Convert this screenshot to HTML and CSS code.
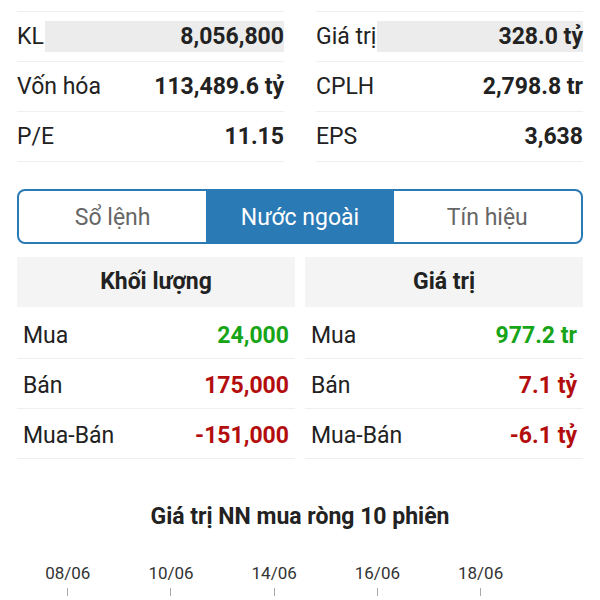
FILE: index.html
```html
<!DOCTYPE html>
<html lang="vi">
<head>
  <meta charset="UTF-8">
  <meta name="viewport" content="width=device-width, initial-scale=1.0">
  <title>Nước ngoài</title>
  <link rel="stylesheet" href="styles.css">
</head>
<body>
  <div class="stats">
    <div class="stat-col">
      <div class="stat-row">
        <span class="label">KL</span>
        <span class="value flash">8,056,800</span>
      </div>
      <div class="stat-row">
        <span class="label">Vốn hóa</span>
        <span class="value">113,489.6 tỷ</span>
      </div>
      <div class="stat-row">
        <span class="label">P/E</span>
        <span class="value">11.15</span>
      </div>
    </div>
    <div class="stat-col">
      <div class="stat-row">
        <span class="label">Giá trị</span>
        <span class="value flash">328.0 tỷ</span>
      </div>
      <div class="stat-row">
        <span class="label">CPLH</span>
        <span class="value">2,798.8 tr</span>
      </div>
      <div class="stat-row">
        <span class="label">EPS</span>
        <span class="value">3,638</span>
      </div>
    </div>
  </div>

  <div class="tabs">
    <div class="tab">Sổ lệnh</div>
    <div class="tab active">Nước ngoài</div>
    <div class="tab">Tín hiệu</div>
  </div>

  <div class="foreign">
    <div class="panel">
      <div class="panel-head">Khối lượng</div>
      <div class="panel-row">
        <span>Mua</span>
        <span class="num up">24,000</span>
      </div>
      <div class="panel-row">
        <span>Bán</span>
        <span class="num down">175,000</span>
      </div>
      <div class="panel-row">
        <span>Mua-Bán</span>
        <span class="num down">-151,000</span>
      </div>
    </div>
    <div class="panel">
      <div class="panel-head">Giá trị</div>
      <div class="panel-row">
        <span>Mua</span>
        <span class="num up">977.2 tr</span>
      </div>
      <div class="panel-row">
        <span>Bán</span>
        <span class="num down">7.1 tỷ</span>
      </div>
      <div class="panel-row">
        <span>Mua-Bán</span>
        <span class="num down">-6.1 tỷ</span>
      </div>
    </div>
  </div>

  <h2 class="chart-title">Giá trị NN mua ròng 10 phiên</h2>

  <div class="axis">
    <div class="tick">08/06</div>
    <div></div>
    <div class="tick">10/06</div>
    <div></div>
    <div class="tick">14/06</div>
    <div></div>
    <div class="tick">16/06</div>
    <div></div>
    <div class="tick">18/06</div>
    <div></div>
  </div>
</body>
</html>
```

FILE: styles.css
```css
body {
  margin: 0;
  font-family: Roboto, "Noto Sans", sans-serif;
  color: #222;
  background: #fff;
}
.stats {
  display: grid;
  grid-template-columns: 1fr 1fr;
  column-gap: 32px;
  padding: 11px 17px 0;
}
.stat-col {
  border-top: 1px solid #efefef;
}
.stat-row {
  display: flex;
  align-items: center;
  height: 49px;
  border-bottom: 1px solid #efefef;
  font-size: 23px;
}
.stat-row .label {
  white-space: nowrap;
}
.stat-row .value {
  margin-left: auto;
  font-weight: bold;
  white-space: nowrap;
}
.stat-row .flash {
  flex: 1;
  text-align: right;
  background-color: #ececec;
  line-height: 31px;
  margin-left: 1px;
}
.tabs {
  display: flex;
  margin: 27px 17px 0;
  border: 2px solid #2a7ab6;
  border-radius: 8px;
  overflow: hidden;
  height: 51px;
}
.tab {
  flex: 1;
  display: flex;
  align-items: center;
  justify-content: center;
  padding-top: 2px;
  font-size: 23px;
  color: #666;
}
.tab.active {
  background-color: #2a7ab6;
  color: #fff;
}
.foreign {
  display: grid;
  grid-template-columns: 1fr 1fr;
  column-gap: 10px;
  margin: 13px 17px 0;
}
.panel-head {
  height: 50px;
  line-height: 50px;
  text-align: center;
  background-color: #f4f4f4;
  font-size: 23px;
  font-weight: bold;
  margin-bottom: 2px;
}
.panel-row {
  display: flex;
  justify-content: space-between;
  align-items: center;
  box-sizing: border-box;
  height: 50px;
  padding: 3px 6px 0;
  border-bottom: 1px solid #efefef;
  font-size: 23px;
}
.num {
  font-weight: bold;
}
.up {
  color: #17a417;
}
.down {
  color: #b30d0d;
}
.chart-title {
  margin: 43px 0 0;
  line-height: 30px;
  text-align: center;
  font-size: 23px;
  font-weight: bold;
  color: #222;
}
.axis {
  display: grid;
  grid-template-columns: repeat(10, 1fr);
  margin: 31px 42px 0;
}
.tick {
  text-align: center;
  font-size: 17px;
  line-height: 20px;
  color: #333;
  white-space: nowrap;
}
.tick::after {
  content: "";
  display: block;
  width: 1px;
  height: 8px;
  margin: 5px auto 0;
  background-color: #aaa;
}
```
